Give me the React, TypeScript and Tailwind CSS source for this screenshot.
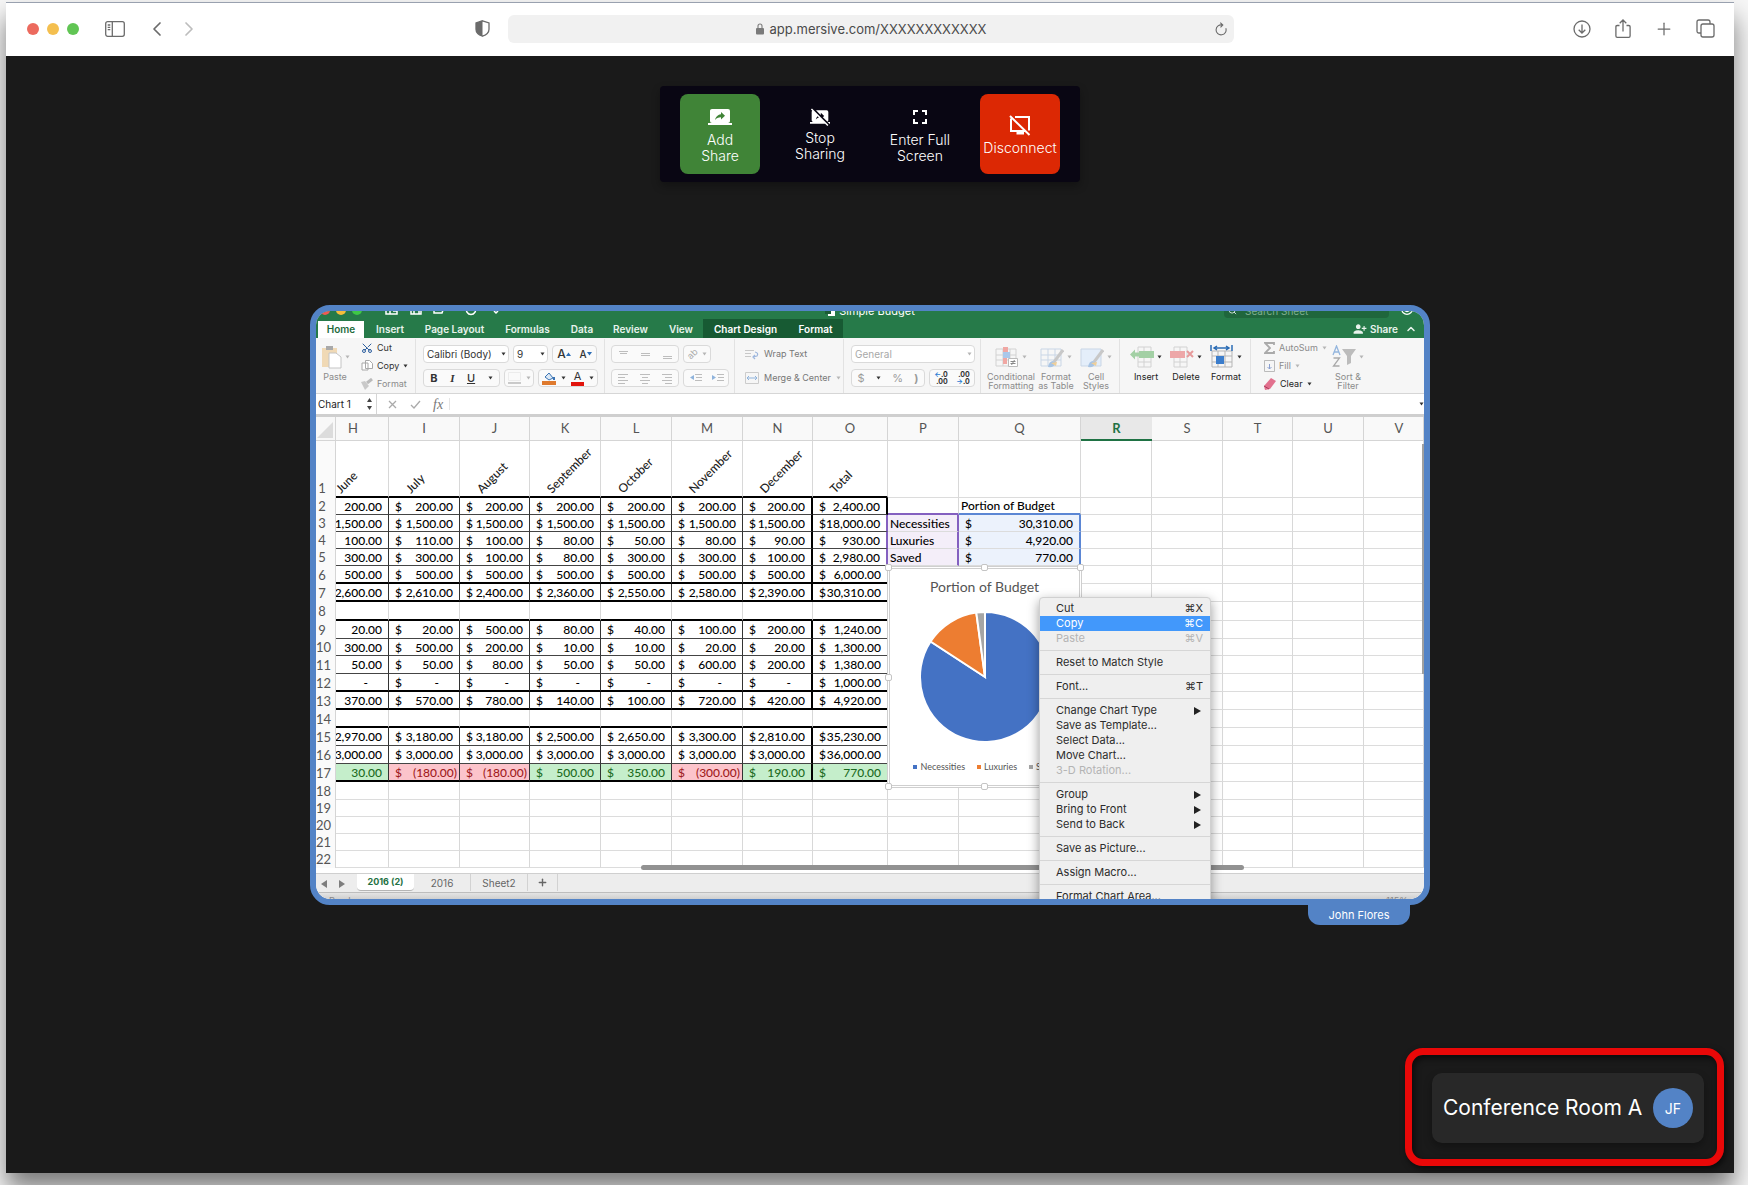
import type { ReactNode } from "react";
import { MdScreenShare, MdStopScreenShare, MdFullscreen, MdPersonAddAlt1 } from "react-icons/md";
import { ChevronLeft, ChevronRight, ChevronUp, Plus, Scissors, Search } from "lucide-react";

/* ---------- browser chrome ---------- */

function BrowserBar() {
  const action = "flex w-5 justify-center";
  return (
    <header className="flex h-[54px] items-center border-t border-gray-400 bg-white pb-[2px] pl-[21px] pr-[19px] text-[#6b6b6b]">
      <div className="flex flex-1 items-center">
        <div className="flex gap-2">
          <span className="size-3 rounded-full bg-[#ec6a5e]" />
          <span className="size-3 rounded-full bg-[#f4bf4f]" />
          <span className="size-3 rounded-full bg-[#61c554]" />
        </div>
        <button aria-label="Sidebar" className="ml-[26px]">
          <svg width="20" height="16" viewBox="0 0 20 16" fill="none" stroke="currentColor" strokeWidth="1.3">
            <rect x="0.7" y="0.7" width="18.6" height="14.6" rx="2" />
            <path d="M7.3 1v14M2.7 4h2.6M2.7 6.3h2.6M2.7 8.6h2.6" />
          </svg>
        </button>
        <button aria-label="Back" className="ml-5">
          <ChevronLeft size={24} strokeWidth={1.7} />
        </button>
        <button aria-label="Forward" className="ml-2 text-[#bdbdbd]">
          <ChevronRight size={24} strokeWidth={1.7} />
        </button>
        <button aria-label="Privacy report" className="ml-auto mr-[18px]">
          <svg width="15" height="17" viewBox="0 0 15 17">
            <path d="M7.5.8 14 3v6.2c0 3.2-2.6 5.6-6.5 7C3.6 14.8 1 12.4 1 9.2V3z" fill="none" stroke="currentColor" strokeWidth="1.3" />
            <path d="M7.5.8V16.2C3.6 14.8 1 12.4 1 9.2V3z" fill="currentColor" />
          </svg>
        </button>
      </div>
      <div className="flex h-7 w-[726px] items-center rounded-md bg-[#f1f1f1] px-[7px]">
        <span className="w-3" />
        <div className="flex flex-1 items-center justify-center gap-[6px]">
          <svg width="8" height="12" viewBox="0 0 8 12" fill="none">
            <rect y="5" width="8" height="6.5" rx="1" fill="#7a7a7a" />
            <path d="M2 5V3a2 2 0 0 1 4 0v2" stroke="#7a7a7a" strokeWidth="1.1" />
          </svg>
          <span className="text-[13px] leading-4 text-[#4a4a4a]">app.mersive.com/XXXXXXXXXXXX</span>
        </div>
        <button aria-label="Reload">
          <svg width="12" height="14" viewBox="0 0 12 14" fill="none" stroke="currentColor" strokeWidth="1.1">
            <path d="M10.8 6.2A5 5 0 1 1 7.2 3M5.3.6 7.8 3 5.5 5.3" />
          </svg>
        </button>
      </div>
      <div className="flex flex-1 items-center justify-end gap-[21px]">
        <button aria-label="Downloads" className={action}>
          <svg width="18" height="18" viewBox="0 0 18 18" fill="none" stroke="currentColor" strokeWidth="1.3">
            <circle cx="9" cy="9" r="8" />
            <path d="M9 4.5v8.3M5.7 9.7 9 13l3.3-3.3" />
          </svg>
        </button>
        <button aria-label="Share" className={action}>
          <svg width="16" height="20" viewBox="0 0 16 20" fill="none" stroke="currentColor" strokeWidth="1.3">
            <path d="M4.5 6.5H2.2q-1.3 0-1.3 1.3v9.2q0 1.3 1.3 1.3h11.6q1.3 0 1.3-1.3V7.8q0-1.3-1.3-1.3h-2.3M8 12.5V1.2M4.7 4.3 8 1l3.3 3.3" />
          </svg>
        </button>
        <button aria-label="New tab" className={action}>
          <Plus size={20} strokeWidth={1.5} />
        </button>
        <button aria-label="Show tabs" className={action}>
          <svg width="19" height="19" viewBox="0 0 19 19" fill="none" stroke="currentColor" strokeWidth="1.3">
            <rect x="5" y="5" width="13" height="13" rx="2" />
            <path d="M5 14H3q-2 0-2-2V3q0-2 2-2h9q2 0 2 2v2" />
          </svg>
        </button>
      </div>
    </header>
  );
}

/* ---------- share controls ---------- */

function Controls() {
  const base =
    "flex size-20 flex-col items-center justify-center gap-[3px] rounded-lg text-[14px] font-light leading-4 text-white";
  return (
    <nav className="flex gap-5 rounded bg-[#090613] px-5 py-2 shadow-[0_4px_8px_rgba(0,0,0,0.3)]">
      <button className={`${base} bg-[#408437]`}>
        <MdScreenShare size={24} />
        <span>Add<br />Share</span>
      </button>
      <button className={base}>
        <MdStopScreenShare size={20} />
        <span>Stop<br />Sharing</span>
      </button>
      <button className={base}>
        <MdFullscreen size={24} />
        <span>Enter Full<br />Screen</span>
      </button>
      <button className={`${base} bg-[#dc2804]`}>
        <svg width="24" height="24" viewBox="0 0 24 24" fill="none" stroke="#fff" strokeWidth="2">
          <path d="M7 4h14v13.5M3 5.5V18h14M2 3l19.5 19" />
          <path d="M8.5 20H16" strokeWidth="3" />
        </svg>
        <span>Disconnect</span>
      </button>
    </nav>
  );
}

/* ---------- spreadsheet: title + tabs ---------- */

function TitleRow() {
  return (
    <div className="flex h-2 items-end justify-between overflow-hidden bg-[#267a49] text-[11px] leading-4 text-white">
      <div className="flex h-4 w-[420px] shrink-0 gap-[6px] pl-1">
        <span className="mt-[2px] size-[10px] rounded-full bg-[#ee5b52]" />
        <span className="mt-[2px] size-[10px] rounded-full bg-[#f6bd3b]" />
        <span className="mt-[2px] size-[10px] rounded-full bg-[#3fc746]" />
        <svg className="ml-4" width="120" height="13" fill="none" stroke="#fff" strokeWidth="1.5">
          <path d="M2 2h11v9H2zM6 2v9M9 8h4M27 2h10v9H27zM30 11V7h5v4M51 10h7l2-6M50 5v5h4M83 5a4.5 4.5 0 1 0 8 0M110 8l2 2 2-2" />
        </svg>
      </div>
      <div className="flex h-4 w-[180px] shrink-0 items-center justify-center gap-1">
        <svg width="10" height="10"><path d="M3 1h7v9H3z" fill="#fff" /><path d="M0 3h6v5H0z" fill="#1b5b35" /></svg>
        Simple Budget
      </div>
      <div className="flex h-4 w-[420px] shrink-0 justify-end gap-3 pr-[11px]">
        <div className="flex h-[15px] w-[165px] items-center gap-2 rounded-sm bg-[#1f663c] pl-1 text-[10px] text-[#7fae90]">
          <Search size={9} color="#fff" />
          Search Sheet
        </div>
        <svg width="12" height="13" fill="none" stroke="#fff" strokeWidth="1.2">
          <circle cx="6" cy="6" r="5.3" /><path d="M3 7q3 3 6 0" />
        </svg>
      </div>
    </div>
  );
}

function TabsRow() {
  const tab = "flex h-[19px] items-center justify-center text-[10px] font-semibold leading-4";
  return (
    <div className="flex h-[19px] items-end bg-[#267a49] text-[#e8f3ec]">
      <button className="ml-[2px] flex h-[17px] w-[46px] items-center justify-center bg-white text-[10px] font-semibold text-[#1e6b3c]">Home</button>
      <button className={`${tab} w-[52px]`}>Insert</button>
      <button className={`${tab} w-[77px]`}>Page Layout</button>
      <button className={`${tab} w-[69px]`}>Formulas</button>
      <button className={`${tab} w-[40px]`}>Data</button>
      <button className={`${tab} w-[57px]`}>Review</button>
      <button className={`${tab} w-[44px]`}>View</button>
      <button className={`${tab} w-[85px] bg-[#175a33] text-white`}>Chart Design</button>
      <button className={`${tab} w-[55px] bg-[#175a33] text-white`}>Format</button>
      <button className={`${tab} ml-auto gap-[3px]`}>
        <MdPersonAddAlt1 size={14} /> Share
      </button>
      <button aria-label="Collapse ribbon" className="mx-[7px] flex h-[19px] items-center">
        <ChevronUp size={12} strokeWidth={3} />
      </button>
    </div>
  );
}

/* ---------- spreadsheet: ribbon ---------- */

function Caret({ dim = false }: { dim?: boolean }) {
  return (
    <svg width="5" height="4" viewBox="0 0 5 4" className="shrink-0">
      <path d="M.5.5h4l-2 3z" fill={dim ? "#b5b5b5" : "#333"} />
    </svg>
  );
}

function Box({ children, className = "" }: { children: ReactNode; className?: string }) {
  return (
    <div className={`flex h-[18px] items-center justify-around rounded-sm border border-[#dadada] bg-[#fafafa] ${className}`}>
      {children}
    </div>
  );
}

function Lines({ d }: { d: string }) {
  return (
    <button className="flex h-4 w-5 items-center justify-center">
      <svg width="12" height="11" stroke="#bdbdbd" strokeWidth="1"><path d={d} /></svg>
    </button>
  );
}

function Dropdown({ label, value, className, dim = false }: { label: string; value: string; className: string; dim?: boolean }) {
  return (
    <div className={`relative ${className}`}>
      <select
        aria-label={label}
        className={`block h-[18px] w-full appearance-none rounded-sm border border-[#dadada] bg-white pl-[3px] text-[10px] leading-4 ${dim ? "text-[#a8a8a8]" : "text-[#333]"}`}
      >
        <option>{value}</option>
      </select>
      <span className="pointer-events-none absolute inset-y-0 right-[3px] flex items-center"><Caret dim={dim} /></span>
    </div>
  );
}

function BigButton({ icon, label, width, dim = false }: { icon: ReactNode; label: string; width: string; dim?: boolean }) {
  return (
    <button className={`flex flex-col items-center text-[9px] leading-[9px] ${width} ${dim ? "text-[#8b8b8b]" : "text-[#222]"}`}>
      <span className="mb-[3px] flex h-6 items-center gap-[3px]">{icon}<Caret dim={dim} /></span>
      <span className="whitespace-pre-line">{label}</span>
    </button>
  );
}

const grid = "M1 4h20v17H1zM1 10h20M1 15h20M8 4v17M15 4v17";

function Ribbon() {
  return (
    <div className="flex h-14 overflow-hidden border-b border-[#d6d6d6] bg-[#f6f6f6] pt-px text-[9px] text-[#333]">
      <div className="w-[45px] shrink-0 pt-[6px]">
        <BigButton
          dim
          width="w-[38px]"
          label="Paste"
          icon={
            <svg width="21" height="24">
              <path d="M1 3h15v19H1z" fill="#f0d9b5" />
              <path d="M5 1h7v4H5z" fill="#a9a9a9" />
              <path d="M8 8h7l5 4v11H8z" fill="#fff" stroke="#c4c4c4" />
            </svg>
          }
        />
      </div>
      <div className="flex w-[55px] shrink-0 flex-col border-r border-[#e2e2e2]">
        <button className="flex h-[18px] items-center gap-1">
          <Scissors size={12} color="#2d5f9e" className="-rotate-90" />Cut
        </button>
        <button className="flex h-[18px] items-center gap-1">
          <svg width="12" height="12" fill="#fff" stroke="#a8a8a8"><path d="M1 3h6v7H1zM4.5.5h4l3 3v5h-7z" /></svg>
          Copy<Caret />
        </button>
        <button className="flex h-[18px] items-center gap-1 text-[#8b8b8b]">
          <svg width="12" height="12"><path d="M0 4l4-1 4 5-4 4z" fill="#c9c9c9" /><path d="M6 5l5-4" stroke="#bbb" strokeWidth="3" /></svg>
          Format
        </button>
      </div>
      <div className="flex w-[189px] shrink-0 flex-col gap-[6px] border-r border-[#e2e2e2] pl-[7px] pt-[6px]">
        <div className="flex gap-1">
          <Dropdown label="Font" value="Calibri (Body)" className="w-[86px]" />
          <Dropdown label="Font size" value="9" className="w-[35px]" />
          <Box className="w-[45px]">
            <button className="flex items-center text-[12px] font-medium">A<svg width="5" height="4"><path d="M0 4h5L2.5.5z" fill="#2b6cb5" /></svg></button>
            <button className="flex items-center text-[10px] font-medium">A<svg width="5" height="4"><path d="M0 0h5L2.5 3.5z" fill="#2b6cb5" /></svg></button>
          </Box>
        </div>
        <div className="flex gap-1 text-[11px]">
          <Box className="w-[77px]">
            <button className="font-bold">B</button>
            <button className="font-bold italic [font-family:'Liberation_Serif',serif]">I</button>
            <button className="font-medium underline">U</button>
            <Caret />
          </Box>
          <Box className="w-[30px]">
            <svg width="13" height="12" fill="none" stroke="#ccc"><path d="M.5.5h12v8H.5z" stroke="#ececec" /><path d="M0 11h13" stroke="#999" /></svg>
            <Caret dim />
          </Box>
          <Box className="w-[60px]">
            <svg width="14" height="14"><path d="M3 6l4-4 4 5-4 2z" fill="#dbe8f5" stroke="#3b74b4" /><path d="M12 6v3" stroke="#3b74b4" strokeWidth="2" /><path d="M0 10h14v4H0z" fill="#df7a2e" /></svg>
            <Caret />
            <button className="h-[15px] border-b-4 border-[#e2140c] px-[3px] leading-[11px]">A</button>
            <Caret />
          </Box>
        </div>
      </div>
      <div className="flex w-[130px] shrink-0 flex-col gap-[6px] border-r border-[#e2e2e2] pl-[6px] pt-[6px]">
        <div className="flex gap-1">
          <Box className="w-[68px]">
            <Lines d="M2 2.5h9M3 4.5h7" />
            <Lines d="M2 4.5h9M2 6.5h9" />
            <Lines d="M2 7.5h9M2 9.5h9" />
          </Box>
          <Box className="w-[28px] text-[#aaa]"><button className="-rotate-45 text-[9px]">ab</button><Caret dim /></Box>
        </div>
        <div className="flex gap-1">
          <Box className="w-[68px]">
            <Lines d="M1 1.5h10M1 4.5h7M1 7.5h10M1 10.5h7" />
            <Lines d="M1 1.5h10M3 4.5h6M1 7.5h10M3 10.5h6" />
            <Lines d="M1 1.5h10M4 4.5h7M1 7.5h10M4 10.5h7" />
          </Box>
          <Box className="w-[46px]">
            <svg width="13" height="10"><path d="M5 2v5L1 4.5z" fill="#8fb3dc" /><path d="M6 1.5h7M7 4.5h6M6 7.5h7" stroke="#bdbdbd" /></svg>
            <svg width="13" height="10"><path d="M1 2v5l4-2.5z" fill="#8fb3dc" /><path d="M6 1.5h7M7 4.5h6M6 7.5h7" stroke="#bdbdbd" /></svg>
          </Box>
        </div>
      </div>
      <div className="flex w-[109px] shrink-0 flex-col gap-[6px] border-r border-[#e2e2e2] pl-[10px] pt-[6px] text-[#777]">
        <button className="flex h-[18px] items-center gap-[5px]">
          <svg width="14" height="11" fill="none"><path d="M0 1.5h9M0 4.5h6M0 7.5h6" stroke="#c8c8c8" /><path d="M10 3q4 1 2 4l-4 1M10 6L8 8l2 2" stroke="#9db6dd" strokeWidth="1.2" /></svg>
          Wrap Text
        </button>
        <button className="flex h-[18px] items-center gap-[5px]">
          <svg width="14" height="12" fill="none"><path d="M.5.5h13v11H.5z" stroke="#ccc" /><path d="M2 6h10M4 4L2 6l2 2M10 4l2 2-2 2" stroke="#8fb3dc" /></svg>
          Merge &amp; Center<Caret dim />
        </button>
      </div>
      <div className="flex w-[137px] shrink-0 flex-col gap-[6px] border-r border-[#e2e2e2] pl-[7px] pt-[6px]">
        <Dropdown label="Number format" value="General" className="w-[124px]" dim />
        <div className="flex gap-1">
          <Box className="w-[74px] text-[11px] text-[#9a9a9a]"><button>$</button><Caret /><button>%</button><button className="font-bold">)</button></Box>
          <Box className="w-[46px] text-[7px] font-bold leading-[7px]">
            <button className="text-right"><span className="text-[#2b7bd3]">←</span>.0<br />.00</button>
            <button className="text-right">.00<br /><span className="text-[#2b7bd3]">→</span>.0</button>
          </Box>
        </div>
      </div>
      <div className="flex w-[139px] shrink-0 border-r border-[#e2e2e2] pl-[7px] pt-[6px]">
        <BigButton dim width="w-[46px]" label={"Conditional\nFormatting"} icon={
          <svg width="24" height="24" fill="none"><path d={grid} stroke="#d2d2d2" /><path d="M8 2h5v5H8zM8 13h4v6H8z" fill="#f0a7a3" /><path d="M8 7h7v6H8z" fill="#a9c8ea" /><path d="M13.5 13.5h9v8h-9z" fill="#fff" stroke="#bbb" /><path d="M15.5 16.5h5M15.5 18.5h5M19.5 15l-3 5" stroke="#888" /></svg>
        } />
        <BigButton dim width="w-[44px]" label={"Format\nas Table"} icon={
          <svg width="24" height="24" fill="none"><path d={grid} stroke="#c9d6e6" /><path d="M23 5l-9 12" stroke="#c8c8c8" strokeWidth="3" /><path d="M8 22q1-6 5-6l3 2q-2 5-8 4z" fill="#a8c4e4" /><path d="M11 18l5 3 1-4z" fill="#f0cf98" /></svg>
        } />
        <BigButton dim width="w-[36px]" label={"Cell\nStyles"} icon={
          <svg width="24" height="24" fill="none"><path d="M1 4h20v17H1z" fill="#e4eefa" stroke="#c9d6e6" /><path d="M23 5l-9 12" stroke="#c8c8c8" strokeWidth="3" /><path d="M8 22q1-6 5-6l3 2q-2 5-8 4z" fill="#a8c4e4" /><path d="M11 18l5 3 1-4z" fill="#f0cf98" /></svg>
        } />
      </div>
      <div className="flex w-[131px] shrink-0 border-r border-[#e2e2e2] pl-[6px] pt-[6px]">
        <BigButton width="w-[40px]" label="Insert" icon={
          <svg width="24" height="24" fill="none"><path d="M8 2h13v20H8zM14 2v20M8 17h13" stroke="#d2d2d2" /><path d="M9 6h15v7H9zM0 9.500l5-5v3h4v4H5v3z" fill="#a3d0a5" /></svg>
        } />
        <BigButton width="w-[40px]" label="Delete" icon={
          <svg width="24" height="24" fill="none"><path d="M4 2h13v20H4zM10 2v20M4 17h13" stroke="#d2d2d2" /><path d="M0 6h15v7H0z" fill="#eda7a8" /><path d="M17 6l6 6M23 6l-6 6" stroke="#e69a9b" strokeWidth="2" /></svg>
        } />
        <BigButton width="w-[40px]" label="Format" icon={
          <svg width="24" height="24" fill="none"><path d="M2 6h20v16H2zM2 11h20M2 17h20M8 6v16M15 6v16" stroke="#b5b5b5" /><path d="M1 0v6M22 0v6M4 3h15M7 1L4 3l3 2M16 1l3 2-3 2" stroke="#2b6cb5" strokeWidth="1.5" /><path d="M6 11h8v8H6z" fill="#3b7dcc" /></svg>
        } />
      </div>
      <div className="flex w-[72px] shrink-0 flex-col pl-[13px] text-[#8b8b8b]">
        <button className="flex h-[18px] items-center gap-1">
          <svg width="11" height="12" fill="none" stroke="#aaa" strokeWidth="1.8" className="shrink-0"><path d="M10 3V1H1l5 5-5 5h9V9" /></svg>
          AutoSum<Caret dim />
        </button>
        <button className="flex h-[18px] items-center gap-1">
          <svg width="11" height="12" fill="none" stroke="#bbb"><path d="M.5.5h10v11H.5z" /><path d="M5.5 4v5M3.5 7l2 2 2-2" stroke="#8a9fd0" /></svg>
          Fill<Caret dim />
        </button>
        <button className="flex h-[18px] items-center gap-1 text-[#222]">
          <svg width="12" height="12"><path d="M0 8l7-8 5 3-6 8-5 1z" fill="#e2718e" /><path d="M0 8l5 3" stroke="#a83c5b" /></svg>
          Clear<Caret />
        </button>
      </div>
      <div className="pl-[7px] pt-[6px]">
        <BigButton dim width="w-[36px]" label={"Sort &\nFilter"} icon={
          <svg width="24" height="24" fill="none" strokeWidth="1.3"><path d="M1 10L4.5 1 8 10M2 7h5" stroke="#94b6de" /><path d="M1.5 13h6l-6 8h6" stroke="#aaa" /><path d="M10 4h14l-5 7v7l-4 2v-9z" fill="#bcbcbc" /></svg>
        } />
      </div>
    </div>
  );
}

function FormulaBar() {
  return (
    <div className="flex h-[23px] items-center border-b-[3px] border-[#cfcfcf] bg-white text-[#aaa]">
      <input aria-label="Name box" defaultValue="Chart 1" className="w-[51px] pl-[2px] text-[10px] text-[#222]" />
      <svg width="9" height="18" fill="#444"><path d="M0 7h5L2.5 3zM0 11h5l-2.5 4z" /></svg>
      <span className="h-5 w-px bg-[#d5d5d5]" />
      <svg className="ml-[11px]" width="9" height="9" stroke="currentColor" strokeWidth="1.3"><path d="M1 1l7 7M8 1L1 8" /></svg>
      <svg className="ml-[13px]" width="11" height="9" fill="none" stroke="currentColor" strokeWidth="1.3"><path d="M1 5l3 3 6-7" /></svg>
      <span className="ml-3 w-4 text-[14px] italic text-[#777] [font-family:'Liberation_Serif',serif]">fx</span>
      <input aria-label="Formula" className="h-3 flex-1 border-l border-[#e5e5e5]" />
      <Caret />
    </div>
  );
}

/* ---------- spreadsheet: cells ---------- */

const columns = [
  ["H", "w-[53px]"], ["I", "w-[71px]"], ["J", "w-[70px]"], ["K", "w-[71px]"],
  ["L", "w-[71px]"], ["M", "w-[71px]"], ["N", "w-[70px]"], ["O", "w-[75px]"],
  ["P", "w-[71px]"], ["Q", "w-[122px]"], ["R", "w-[71px]"], ["S", "w-[71px]"],
  ["T", "w-[70px]"], ["U", "w-[71px]"], ["V", ""],
];

const months = ["June", "July", "August", "September", "October", "November", "December", "Total"];

const data: Record<number, string[]> = {
  2: ["200.00", "200.00", "200.00", "200.00", "200.00", "200.00", "200.00", "2,400.00"],
  3: ["1,500.00", "1,500.00", "1,500.00", "1,500.00", "1,500.00", "1,500.00", "1,500.00", "18,000.00"],
  4: ["100.00", "110.00", "100.00", "80.00", "50.00", "80.00", "90.00", "930.00"],
  5: ["300.00", "300.00", "100.00", "80.00", "300.00", "300.00", "100.00", "2,980.00"],
  6: ["500.00", "500.00", "500.00", "500.00", "500.00", "500.00", "500.00", "6,000.00"],
  7: ["2,600.00", "2,610.00", "2,400.00", "2,360.00", "2,550.00", "2,580.00", "2,390.00", "30,310.00"],
  9: ["20.00", "20.00", "500.00", "80.00", "40.00", "100.00", "200.00", "1,240.00"],
  10: ["300.00", "500.00", "200.00", "10.00", "10.00", "20.00", "20.00", "1,300.00"],
  11: ["50.00", "50.00", "80.00", "50.00", "50.00", "600.00", "200.00", "1,380.00"],
  12: ["-", "-", "-", "-", "-", "-", "-", "1,000.00"],
  13: ["370.00", "570.00", "780.00", "140.00", "100.00", "720.00", "420.00", "4,920.00"],
  15: ["2,970.00", "3,180.00", "3,180.00", "2,500.00", "2,650.00", "3,300.00", "2,810.00", "35,230.00"],
  16: ["3,000.00", "3,000.00", "3,000.00", "3,000.00", "3,000.00", "3,000.00", "3,000.00", "36,000.00"],
  17: ["30.00", "(180.00)", "(180.00)", "500.00", "350.00", "(300.00)", "190.00", "770.00"],
};

const summary: Record<number, [string, string]> = {
  3: ["Necessities", "30,310.00"],
  4: ["Luxuries", "4,920.00"],
  5: ["Saved", "770.00"],
};

const shortRows = [2, 3, 4, 5, 10, 19, 20, 21, 22];
const thickRows = [1, 6, 7, 8, 12, 13, 14, 17];

function rowHeight(row: number) {
  if (row === 8) return "h-[19px]";
  return shortRows.includes(row) ? "h-[17px]" : "h-[18px]";
}

function cellClass(row: number, col: number) {
  const value = data[row]?.[col];
  const c = ["p-0"];
  if (col < 8 && thickRows.includes(row)) c.push("border-b-2 border-b-black");
  else if (col < 8 && data[row]) c.push("border-b border-b-[#444]");
  else if (row === 2 && col === 8) c.push("border-b-2 border-b-[#8460c0]");
  else if (row === 2 && col === 9) c.push("border-b-2 border-b-[#5b86d4]");
  else c.push("border-b border-b-[#dcdcdc]");

  if (col === 6 && value) c.push("border-r-2 border-r-black");
  else if (col < 7 && value) c.push("border-r border-r-[#333]");
  else if (col === 7 && row === 2) c.push("border-r-2 border-r-black");
  else if (summary[row] && (col === 7 || col === 8)) c.push("border-r-2 border-r-[#8460c0]");
  else if (summary[row] && col === 9) c.push("border-r-2 border-r-[#5b86d4]");
  else c.push("border-r border-r-[#d8d8d8]");

  if (summary[row] && col === 8) c.push("bg-[#f4eef9]");
  if (summary[row] && col === 9) c.push("bg-[#ecf2fc]");
  if (row === 17 && value) {
    c.push(value.startsWith("(") ? "bg-[#fcc4cb] text-[#a01c22]" : "bg-[#c5eecb] text-[#1c6b22]");
  }
  return c.join(" ");
}

function cellContent(row: number, col: number) {
  const value = data[row]?.[col];
  if (value) {
    const right = value === "-" ? "pr-[20px]" : value.startsWith("(") ? "pr-[2px]" : "pr-[6px]";
    return (
      <div className={`flex h-[15px] items-center overflow-hidden pl-[6px] ${right} ${col === 0 ? "justify-end" : "justify-between"}`}>
        {col > 0 && <span>$</span>}
        <span>{value}</span>
      </div>
    );
  }
  if (row === 2 && col === 9) return <div className="h-[15px] pl-[2px]">Portion of Budget</div>;
  if (summary[row] && col === 8) return <div className="h-[15px] pl-[2px]">{summary[row][0]}</div>;
  if (summary[row] && col === 9) {
    return (
      <div className="flex h-[15px] justify-between px-[6px]">
        <span>$</span>
        <span>{summary[row][1]}</span>
      </div>
    );
  }
  return null;
}

function Cells() {
  const rows = Array.from({ length: 21 }, (_, i) => i + 2);
  return (
    <table className="w-full table-fixed border-separate border-spacing-0 bg-white text-[12px] font-medium leading-[15px] text-black [font-family:Lato,sans-serif]">
      <thead>
        <tr className="h-6 text-[13px] text-[#555]">
          <th className="w-5 border-b border-r border-[#d5d5d5] bg-[#f8f8f8] p-0">
            <svg width="18" height="20" className="block"><path d="M17 3v16H1z" fill="#dcdcdc" /></svg>
          </th>
          {columns.map(([name, width]) => (
            <th
              key={name}
              className={`p-0 ${width} ${
                name === "R"
                  ? "border-b-2 border-b-[#1f7244] bg-[#e8e8e8] font-bold text-[#1f7244]"
                  : "border-b border-r border-[#d5d5d5] bg-[#f9f9f9] font-normal"
              } ${name === "H" ? "pr-[18px]" : ""} ${name === "V" ? "pl-[11px]" : ""}`}
            >
              {name}
            </th>
          ))}
        </tr>
      </thead>
      <tbody>
        <tr className="h-[57px]">
          <th className="border-r border-[#d5d5d5] bg-[#fafafa] p-0 pb-[2px] pr-[7px] align-bottom text-[13px] font-normal text-[#555]">1</th>
          {columns.map(([name], col) => (
            <td key={name} className={cellClass(1, col)}>
              {months[col] && (
                <div className="relative h-[55px]">
                  <span
                    className={`absolute bottom-0 origin-bottom-left -rotate-45 text-[12px] leading-[15px] text-[#222] ${
                      col === 0 ? "left-[7px]" : "left-6"
                    }`}
                  >
                    {months[col]}
                  </span>
                </div>
              )}
            </td>
          ))}
        </tr>
        {rows.map((row) => (
          <tr key={row} className={rowHeight(row)}>
            <th className="border-r border-[#d5d5d5] bg-[#fafafa] p-0 pr-[7px] text-[13px] font-normal text-[#555]">{row}</th>
            {columns.map(([name], col) => (
              <td key={name} className={cellClass(row, col)}>{cellContent(row, col)}</td>
            ))}
          </tr>
        ))}
      </tbody>
    </table>
  );
}

/* ---------- chart ---------- */

const slices = [
  { value: 30310, color: "#4472c4" },
  { value: 4920, color: "#ed7d31" },
  { value: 770, color: "#a5a5a5" },
];

function Pie() {
  const total = slices.reduce((sum, s) => sum + s.value, 0);
  let angle = 0;
  return (
    <svg width="132" height="132" viewBox="-66 -66 132 132">
      {slices.map((s) => {
        const start = angle;
        angle += (s.value / total) * Math.PI * 2;
        const r = 65;
        const large = angle - start > Math.PI ? 1 : 0;
        return (
          <path
            key={s.color}
            d={`M0 0L${r * Math.sin(start)} ${-r * Math.cos(start)}A${r} ${r} 0 ${large} 1 ${r * Math.sin(angle)} ${-r * Math.cos(angle)}Z`}
            fill={s.color}
            stroke="#fff"
            strokeWidth="2"
          />
        );
      })}
    </svg>
  );
}

function Chart() {
  const handle = "absolute size-[7px] rounded-[2px] border border-[#c4c4c4] bg-white";
  return (
    <div className="absolute left-[571px] top-[149px] flex h-[222px] w-[195px] flex-col items-center border-[3px] border-double border-[#cfcfcf] bg-white pt-2 [font-family:Lato,sans-serif]">
      <div className="text-[14px] leading-5 text-[#555]">Portion of Budget</div>
      <div className="mt-[14px]"><Pie /></div>
      <div className="mt-[18px] flex gap-3 pl-1 text-[9px] leading-3 text-[#555]">
        <span className="flex items-center gap-[3px]"><i className="size-1 bg-[#4472c4]" />Necessities</span>
        <span className="flex items-center gap-[3px]"><i className="size-1 bg-[#ed7d31]" />Luxuries</span>
        <span className="flex items-center gap-[3px]"><i className="size-1 bg-[#a5a5a5]" />Saved</span>
      </div>
      <span className={`${handle} -left-[5px] -top-[5px]`} />
      <span className={`${handle} -top-[5px] left-[91px]`} />
      <span className={`${handle} -right-[5px] -top-[5px]`} />
      <span className={`${handle} -left-[5px] top-[105px]`} />
      <span className={`${handle} -bottom-[5px] -left-[5px]`} />
      <span className={`${handle} -bottom-[5px] left-[91px]`} />
    </div>
  );
}

/* ---------- context menu ---------- */

type Item = { label: string; keys?: string; sub?: boolean; state?: "off" | "active" };

const menu: Item[][] = [
  [{ label: "Cut", keys: "⌘X" }, { label: "Copy", keys: "⌘C", state: "active" }, { label: "Paste", keys: "⌘V", state: "off" }],
  [{ label: "Reset to Match Style" }],
  [{ label: "Font...", keys: "⌘T" }],
  [
    { label: "Change Chart Type", sub: true },
    { label: "Save as Template..." },
    { label: "Select Data..." },
    { label: "Move Chart..." },
    { label: "3-D Rotation...", state: "off" },
  ],
  [{ label: "Group", sub: true }, { label: "Bring to Front", sub: true }, { label: "Send to Back", sub: true }],
  [{ label: "Save as Picture..." }],
  [{ label: "Assign Macro..." }],
  [{ label: "Format Chart Area..." }],
];

function ContextMenu() {
  return (
    <div className="absolute left-[723px] top-[286px] w-[172px] rounded-t border border-[#d0d0d0] bg-[#efefef] pt-[3px] text-[11px] leading-[15px] text-[#2c2c2c] shadow-[0_4px_12px_rgba(0,0,0,0.4)]">
      {menu.map((group, i) => (
        <div key={i} className={i > 0 ? "mt-1 border-t border-[#d6d6d6] pt-1" : ""}>
          {group.map((item) => (
            <button
              key={item.label}
              className={`flex h-[15px] w-full items-center justify-between pl-4 pr-[7px] ${
                item.state === "active" ? "bg-[#4298fb] text-white" : item.state === "off" ? "text-[#b4b4b4]" : ""
              }`}
            >
              {item.label}
              {item.keys && <span>{item.keys}</span>}
              {item.sub && (
                <svg width="9" height="8"><path d="M0 0l7 4-7 4z" fill="#222" /></svg>
              )}
            </button>
          ))}
        </div>
      ))}
    </div>
  );
}

function SheetTabs() {
  return (
    <div className="border-t border-[#cfcfcf] bg-[#ededed] text-[10px] leading-3 text-[#666]">
      <div className="flex h-[19px] items-start border-b border-[#bdbdbd]">
        <svg width="41" height="18" fill="#7d7d7d"><path d="M11 6v8l-6-4zM23 6v8l6-4z" /></svg>
        <button className="h-[17px] w-[57px] rounded-b-sm border-b border-[#b5b5b5] bg-white text-[9px] font-bold text-[#1f7244]">2016 (2)</button>
        <button className="h-[17px] w-[57px] border-r border-[#d2d2d2]">2016</button>
        <button className="h-[17px] w-[57px] border-r border-[#d2d2d2]">Sheet2</button>
        <button aria-label="Add sheet" className="flex h-[17px] w-[30px] items-center justify-center border-r border-[#d2d2d2]">
          <Plus size={11} strokeWidth={3} />
        </button>
      </div>
      <div className="flex h-[6px] justify-between overflow-hidden bg-gradient-to-b from-[#e4e4e4] to-[#cfcfcf] pl-[13px] pr-4 text-[9px] leading-4 text-[#888]">
        <span>Ready</span>
        <span>115%</span>
      </div>
    </div>
  );
}

function SharedScreen() {
  return (
    <div className="mt-[123px] flex w-[1120px] max-w-full flex-col items-end">
      <div className="w-full overflow-hidden rounded-[20px] border-[6px] border-[#5383c6] bg-[#5383c6]">
        <div className="relative overflow-hidden rounded-[14px] bg-white">
          <TitleRow />
          <TabsRow />
          <Ribbon />
          <FormulaBar />
          <div className="relative h-[456px] overflow-hidden">
            <Cells />
            <Chart />
            <span className="absolute bottom-[3px] left-[325px] h-[5px] w-[603px] rounded-full bg-[#929292]" />
            <span className="absolute right-0 top-[27px] h-[230px] w-[2px] bg-[#a0a0a0]" />
          </div>
          <SheetTabs />
          <ContextMenu />
        </div>
      </div>
      <div className="mr-5 flex h-5 w-[102px] items-center justify-center rounded-b-xl bg-[#5383c6] text-[11px] text-white">
        John Flores
      </div>
    </div>
  );
}

export default function App() {
  return (
    <div className="flex min-h-screen flex-col bg-[#f7f7f7] pb-3 pl-[6px] pr-[14px] pt-[2px] [font-family:Inter,sans-serif]">
      <div className="flex flex-1 flex-col bg-[#1a1a1a] shadow-[0_16px_24px_rgba(0,0,0,0.5)]">
        <BrowserBar />
        <main className="flex flex-1 flex-col items-center pt-[30px]">
          <Controls />
          <SharedScreen />
          <div className="mb-[7px] mr-[10px] mt-auto self-end rounded-[18px] border-[7px] border-[#e90808] pb-4 pl-5 pr-[13px] pt-[18px] shadow-[2px_3px_6px_rgba(0,0,0,0.6),inset_2px_3px_6px_rgba(0,0,0,0.6)]">
            <div className="flex h-[70px] w-[272px] items-center justify-between rounded-[10px] bg-[#282828] px-[11px] text-white shadow-[0_4px_8px_rgba(0,0,0,0.3)]">
              <span className="text-[21px]">Conference Room A</span>
              <span className="flex size-10 items-center justify-center rounded-full bg-[#5383c6] text-[14px]">JF</span>
            </div>
          </div>
        </main>
      </div>
    </div>
  );
}
